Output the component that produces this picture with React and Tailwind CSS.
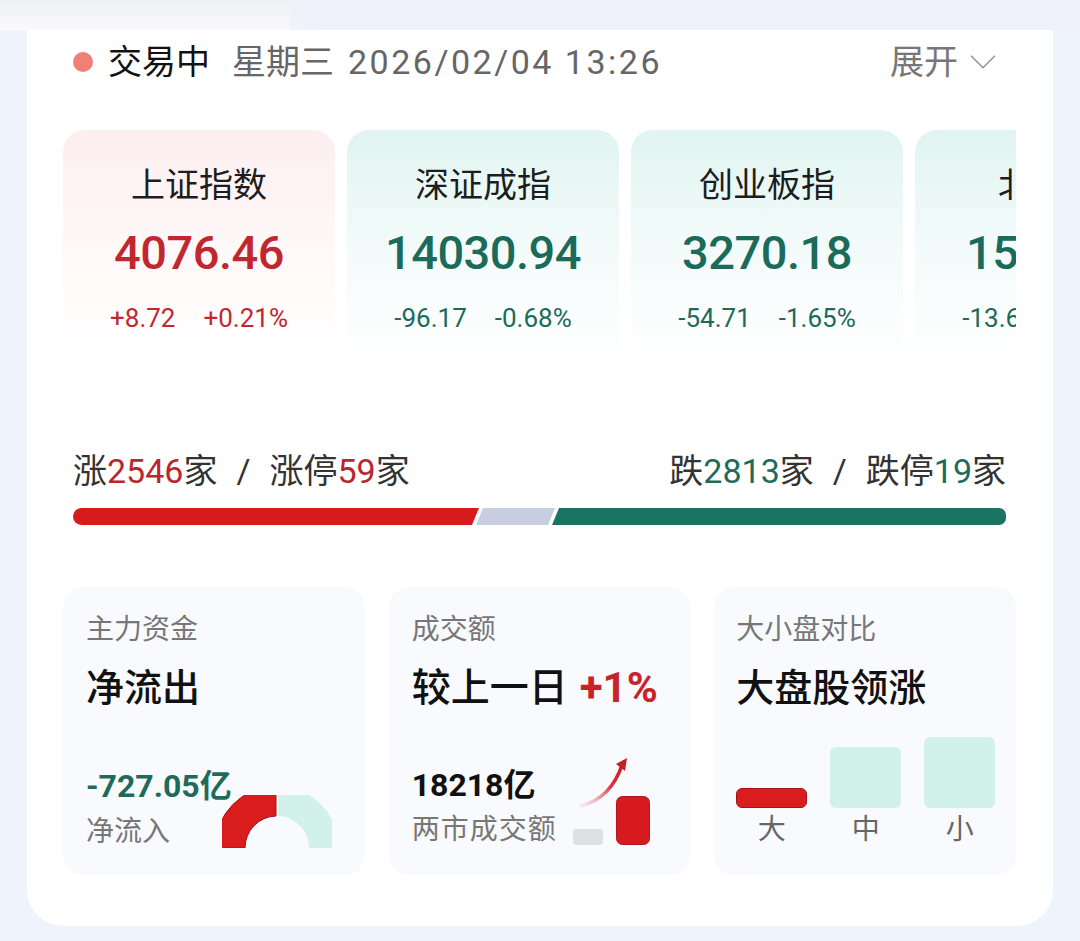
import React from 'react';
import { ChevronDown } from 'lucide-react';

const indices = [
  { name: '上证指数', value: '4076.46', chg: '+8.72', pct: '+0.21%', up: true },
  { name: '深证成指', value: '14030.94', chg: '-96.17', pct: '-0.68%' },
  { name: '创业板指', value: '3270.18', chg: '-54.71', pct: '-1.65%' },
  { name: '北证50', value: '1530.27', chg: '-13.62', pct: '-0.88%' },
];

const IndexCard = ({ item }) => {
  const tone = item.up ? 'text-[#c1272f]' : 'text-[#1b6b5b]';
  return (
    <div
      className={`shrink-0 w-[272px] h-[232px] rounded-[22px] flex flex-col items-center pt-[33px] bg-linear-to-b ${
        item.up ? 'from-[#fdeef0] via-[#fff8f8] to-white' : 'from-[#e0f4f1] via-[#f3fbfa] to-white'
      }`}
    >
      <div className="text-[34px] leading-[44px] text-[#1d1d1d] whitespace-nowrap">{item.name}</div>
      <div className={`mt-[14px] text-[47px] leading-[64px] font-medium tracking-[-0.5px] ${tone}`}>{item.value}</div>
      <div className={`mt-[15px] flex gap-7 text-[26px] leading-[36px] ${tone}`}>
        <span>{item.chg}</span>
        <span>{item.pct}</span>
      </div>
    </div>
  );
};

// half donut, clipped to its box, as in the fund-flow card
const Gauge = () => (
  <svg width="110" height="53" viewBox="0 0 110 53" className="shrink-0 -ml-[14px] mb-[4px]">
    <path d="M -7 53 A 62 62 0 0 1 54 -9 L 54 21 A 32 32 0 0 0 23 53 Z" fill="#d91c1c" stroke="#a51414" strokeWidth="1" />
    <path d="M 56 -9 A 62 62 0 0 1 117 53 L 87 53 A 32 32 0 0 0 56 21 Z" fill="#d3f1eb" />
  </svg>
);

const TurnoverChart = () => (
  <svg width="84" height="92" viewBox="0 0 84 92" className="shrink-0 ml-[14px] mb-[2px]">
    <defs>
      <linearGradient id="arrowGrad" x1="0" y1="1" x2="1" y2="0">
        <stop offset="0" stopColor="#f3c4c6" stopOpacity="0.3" />
        <stop offset="0.6" stopColor="#d9353c" />
        <stop offset="1" stopColor="#c81e25" />
      </linearGradient>
    </defs>
    <path d="M 10 50 Q 40 42 51 9" fill="none" stroke="url(#arrowGrad)" strokeWidth="3.5" strokeLinecap="round" />
    <path d="M 56 2 L 45 8 L 54 15 Z" fill="#c81e25" />
    <rect x="2" y="73" width="30" height="16" rx="3" fill="#dfe0e4" />
    <rect x="45.5" y="40.5" width="33" height="48" rx="6" fill="#d71a1f" stroke="#b3151a" />
  </svg>
);

const Sep = () => <span className="px-[19px]">/</span>;

const App = () => {
  return (
    <div className="w-[1080px] h-[941px] overflow-hidden bg-[#eff3fc] font-['Roboto','Noto_Sans_CJK_SC',sans-serif]">
      {/* top strip */}
      <div className="flex h-[30px]">
        <div className="w-[290px] bg-linear-to-b from-[#eff0f4] to-[#fafafc]"></div>
        <div className="flex-1 bg-[#eef1fa] rounded-bl-[30px]"></div>
      </div>

      <div className="ml-[27px] w-[1026px] h-[896px] bg-white rounded-b-[36px] pl-[36px] pr-[37px] pt-[10px]">
        {/* header */}
        <div className="flex items-center pl-[10px] pr-[10px] h-[44px]">
          <span className="w-[20px] h-[20px] rounded-full bg-[#f07f78]"></span>
          <span className="ml-[15px] text-[34px] leading-[44px] text-[#111]">交易中</span>
          <span className="ml-[22px] text-[34px] leading-[44px] text-[#666]">星期三</span>
          <span className="ml-[14px] text-[34px] leading-[44px] text-[#666] tracking-[2.5px]">2026/02/04 13:26</span>
          <span className="ml-auto text-[34px] leading-[44px] text-[#777]">展开</span>
          <ChevronDown className="ml-[2px] text-[#999]" size={46} strokeWidth={0.9} />
        </div>

        {/* index cards */}
        <div className="mt-[46px] flex gap-3 overflow-hidden">
          {indices.map((item) => (
            <IndexCard key={item.name} item={item} />
          ))}
        </div>

        {/* breadth */}
        <div className="mt-[89px] px-[10px] flex justify-between text-[34px] leading-[40px] text-[#333]">
          <div>
            涨<span className="text-[#b8262e]">2546</span>家<Sep />涨停<span className="text-[#b8262e]">59</span>家
          </div>
          <div>
            跌<span className="text-[#1e6b5c]">2813</span>家<Sep />跌停<span className="text-[#1e6b5c]">19</span>家
          </div>
        </div>
        <div className="mt-[17px] mx-[10px] flex h-[17px]">
          <div className="w-[406px] bg-[#d71b1d] rounded-l-full [clip-path:polygon(0_0,100%_0,calc(100%-7px)_100%,0_100%)]"></div>
          <div className="ml-[-3px] w-[79px] bg-[#c6cee0] [clip-path:polygon(7px_0,100%_0,calc(100%-7px)_100%,0_100%)]"></div>
          <div className="ml-[-3px] flex-1 bg-[#1b7461] rounded-r-[7px] [clip-path:polygon(7px_0,100%_0,100%_100%,0_100%)]"></div>
        </div>

        {/* bottom cards */}
        <div className="mt-[62px] grid grid-cols-3 gap-6">
          <div className="h-[288px] rounded-[20px] bg-[#f8fafd] pl-[23px] pt-[23px] pb-[23px] flex flex-col">
            <div className="text-[28px] leading-[40px] text-[#777]">主力资金</div>
            <div className="mt-[13px] text-[38px] leading-[50px] font-medium text-[#111]">净流出</div>
            <div className="mt-auto flex items-end">
              <div className="shrink-0 w-[150px]">
                <div className="mb-[6px] text-[32px] leading-[40px] font-bold text-[#1e6b5c] whitespace-nowrap">-727.05亿</div>
                <div className="text-[28px] leading-[40px] text-[#777]">净流入</div>
              </div>
              <Gauge />
            </div>
          </div>

          <div className="h-[288px] rounded-[20px] bg-[#f8fafd] pl-[23px] pt-[23px] pb-[25px] flex flex-col">
            <div className="text-[28px] leading-[40px] text-[#777]">成交额</div>
            <div className="mt-[13px] flex items-center text-[39px] leading-[50px] font-medium text-[#111] whitespace-nowrap">
              较上一日<span className="ml-[12px] text-[42px] font-bold text-[#c8232b]">+1%</span>
            </div>
            <div className="mt-auto flex items-end">
              <div className="shrink-0">
                <div className="mb-[5px] text-[32px] leading-[40px] font-bold text-[#111]">18218亿</div>
                <div className="text-[28px] leading-[40px] text-[#777] tracking-[1px]">两市成交额</div>
              </div>
              <TurnoverChart />
            </div>
          </div>

          <div className="h-[288px] rounded-[20px] bg-[#f8fafd] pl-[22px] pt-[23px] pb-[25px] flex flex-col">
            <div className="text-[28px] leading-[40px] text-[#777]">大小盘对比</div>
            <div className="mt-[13px] text-[38px] leading-[50px] font-medium text-[#111]">大盘股领涨</div>
            <div className="mt-auto flex gap-[23px]">
              {[
                { label: '大', h: 'h-[20px]', bar: 'bg-[#d91c1c] border border-[#a51414]' },
                { label: '中', h: 'h-[61px]', bar: 'bg-[#d2f1eb]' },
                { label: '小', h: 'h-[71px]', bar: 'bg-[#d2f1eb]' },
              ].map((b) => (
                <div key={b.label} className="w-[71px] flex flex-col items-center">
                  <div className="h-[72px] w-full flex items-end">
                    <div className={`w-full rounded-[6px] ${b.h} ${b.bar}`}></div>
                  </div>
                  <div className="mt-[2px] text-[28px] leading-[40px] text-[#666]">{b.label}</div>
                </div>
              ))}
            </div>
          </div>
        </div>
      </div>
    </div>
  );
};

export default App;
